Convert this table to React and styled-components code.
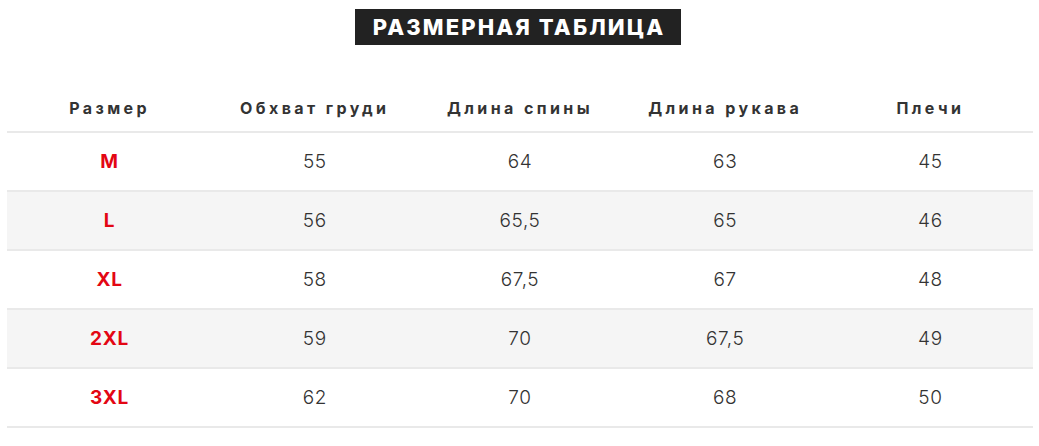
import React from "react";
import styled, { createGlobalStyle } from "styled-components";

const GlobalStyle = createGlobalStyle`
  body {
    margin: 0;
    background: #fff;
    font-family: Inter, "Open Sans", Arial, sans-serif;
    color: #333;
  }
`;

const Page = styled.div`
  padding: 9px 6px 0 7px;
  display: flex;
  flex-direction: column;
  align-items: center;
`;

const Title = styled.h2`
  margin: 0 4px 0 0;
  background: #222;
  color: #fff;
  font-size: 22px;
  font-weight: 800;
  letter-spacing: 2.1px;
  line-height: 36px;
  height: 36px;
  padding: 0 16px 0 18px;
`;

const Table = styled.div`
  width: 100%;
  margin-top: 36px;
`;

const Row = styled.div`
  display: grid;
  grid-template-columns: repeat(5, 1fr);
  align-items: center;
  height: ${(p) => (p.$head ? "50px" : "57px")};
  background: ${(p) => (p.$shade ? "#f5f5f5" : "#fff")};
  border-bottom: 2px solid #e9e9e9;
`;

const HeadCell = styled.div`
  text-align: center;
  font-size: 16px;
  font-weight: 700;
  letter-spacing: 3.4px;
  color: #333;
  padding-top: 3px;
`;

const Cell = styled.div`
  text-align: center;
  font-size: 19px;
  font-weight: 300;
  letter-spacing: 0.6px;
  color: #333;
`;

const SizeCell = styled(Cell)`
  color: #e30613;
  font-weight: 700;
  letter-spacing: 0.8px;
`;

const head = ["Размер", "Обхват груди", "Длина спины", "Длина рукава", "Плечи"];

const rows = [
  ["M", "55", "64", "63", "45"],
  ["L", "56", "65,5", "65", "46"],
  ["XL", "58", "67,5", "67", "48"],
  ["2XL", "59", "70", "67,5", "49"],
  ["3XL", "62", "70", "68", "50"],
];

export default function App() {
  return (
    <>
      <GlobalStyle />
      <Page>
        <Title>РАЗМЕРНАЯ ТАБЛИЦА</Title>
        <Table>
          <Row $head>
            {head.map((h) => (
              <HeadCell key={h}>{h}</HeadCell>
            ))}
          </Row>
          {rows.map((r, i) => (
            <Row key={r[0]} $shade={i % 2 === 1}>
              <SizeCell>{r[0]}</SizeCell>
              {r.slice(1).map((v, j) => (
                <Cell key={j}>{v}</Cell>
              ))}
            </Row>
          ))}
        </Table>
      </Page>
    </>
  );
}
